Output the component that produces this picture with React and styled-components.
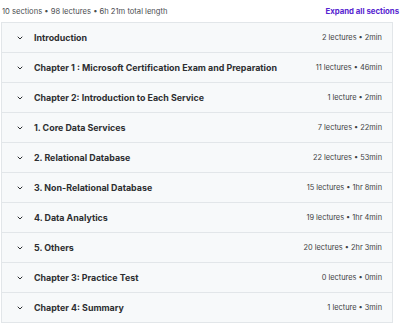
import React from "react";
import styled, { createGlobalStyle } from "styled-components";

const GlobalStyle = createGlobalStyle`
  body {
    margin: 0;
    background: #ffffff;
    font-family: Inter, "Liberation Sans", sans-serif;
    color: #2d2f31;
  }
`;

const Page = styled.div`
  width: 400px;
  padding: 4px 4px 0 1px;
  box-sizing: border-box;
`;

const TopBar = styled.div`
  display: flex;
  justify-content: space-between;
  align-items: center;
  height: 14px;
  margin-bottom: 4px;
  padding-left: 1px;
`;

const Summary = styled.span`
  font-size: 7.6px;
  color: #4a4d50;
`;

const ExpandAll = styled.button`
  background: transparent;
  border: 0;
  padding: 0;
  margin-right: -3px;
  font-family: inherit;
  font-size: 7.8px;
  font-weight: 700;
  color: #5624d0;
  cursor: pointer;
`;

const SectionList = styled.div`
  width: 392px;
  border: 1px solid #e2e6e9;
  border-bottom: 0;
  box-sizing: border-box;
`;

const SectionRow = styled.div`
  display: flex;
  align-items: center;
  height: 30px;
  padding: 0 10px 0 14px;
  background: #f7f9fa;
  border-bottom: 1px solid #e2e6e9;
  box-sizing: border-box;
`;

const Chevron = styled.svg`
  width: 8px;
  height: 8px;
  margin-right: 10px;
  flex-shrink: 0;
`;

const SectionTitle = styled.span`
  flex: 1;
  font-size: 8.9px;
  font-weight: 700;
  color: #2d2f31;
  white-space: nowrap;
`;

const SectionMeta = styled.span`
  font-size: 7.4px;
  color: #3e4143;
  white-space: nowrap;
`;

const sections = [
  { title: "Introduction", meta: "2 lectures • 2min" },
  { title: "Chapter 1 : Microsoft Certification Exam and Preparation", meta: "11 lectures • 46min" },
  { title: "Chapter 2: Introduction to Each Service", meta: "1 lecture • 2min" },
  { title: "1. Core Data Services", meta: "7 lectures • 22min" },
  { title: "2. Relational Database", meta: "22 lectures • 53min" },
  { title: "3. Non-Relational Database", meta: "15 lectures • 1hr 8min" },
  { title: "4. Data Analytics", meta: "19 lectures • 1hr 4min" },
  { title: "5. Others", meta: "20 lectures • 2hr 3min" },
  { title: "Chapter 3: Practice Test", meta: "0 lectures • 0min" },
  { title: "Chapter 4: Summary", meta: "1 lecture • 3min" },
];

const App = () => {
  return (
    <>
      <GlobalStyle />
      <Page>
        <TopBar>
          <Summary>10 sections • 98 lectures • 6h 21m total length</Summary>
          <ExpandAll>Expand all sections</ExpandAll>
        </TopBar>
        <SectionList>
          {sections.map((s) => (
            <SectionRow key={s.title}>
              <Chevron viewBox="0 0 24 24">
                <path d="M6 9l6 6 6-6" fill="none" stroke="#2d2f31" strokeWidth="3" strokeLinecap="round" strokeLinejoin="round" />
              </Chevron>
              <SectionTitle>{s.title}</SectionTitle>
              <SectionMeta>{s.meta}</SectionMeta>
            </SectionRow>
          ))}
        </SectionList>
      </Page>
    </>
  );
};

export default App;
